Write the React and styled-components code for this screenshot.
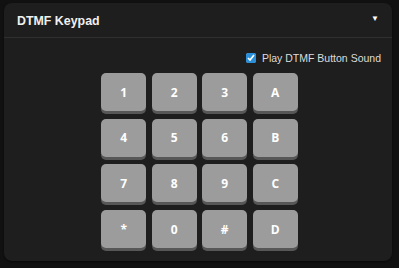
import React from "react";
import styled, { createGlobalStyle } from "styled-components";

const Global = createGlobalStyle`
  html, body { margin: 0; padding: 0; background: #111111; }
  body { font-family: "Liberation Sans", Arial, sans-serif; }
  * { box-sizing: border-box; }
`;

const Page = styled.div`
  padding: 3px 7px 7px 4px;
  width: 399px;
  height: 268px;
`;

const Card = styled.section`
  background: #1e1e1e;
  border-radius: 8px;
  height: 258px;
  display: flex;
  flex-direction: column;
  box-shadow: 0 1px 2px rgba(0,0,0,0.5);
`;

const Header = styled.header`
  display: flex;
  align-items: center;
  justify-content: space-between;
  height: 35px;
  padding: 0 13px 0 13px;
  border-bottom: 1px solid #2f2f2f;
`;

const Title = styled.h2`
  margin: 0;
  font-size: 12.4px;
  font-weight: 700;
  color: #f0f0f0;
  padding-top: 1px;
`;

const Caret = styled.span`
  font-size: 8px;
  color: #ffffff;
  margin-top: -3px;
`;

const Body = styled.div`
  display: flex;
  flex-direction: column;
  align-items: center;
  padding: 13px 11px 0 11px;
`;

const SoundRow = styled.label`
  align-self: flex-end;
  display: flex;
  align-items: center;
  gap: 6px;
  font-size: 10.5px;
  color: #dcdcdc;
  height: 14px;
`;

const Check = styled.input`
  margin: 0;
  width: 10px;
  height: 10px;
  accent-color: #2a8fd8;
`;

const Grid = styled.div`
  display: grid;
  grid-template-columns: repeat(4, 45px);
  grid-auto-rows: 40px;
  column-gap: 5.5px;
  row-gap: 5.7px;
  margin-top: 8px;
  margin-left: 3px;
`;

const Key = styled.button`
  border: none;
  border-radius: 5px;
  background: #9c9c9c;
  color: #ffffff;
  font-family: "Open Sans", "Liberation Sans", sans-serif;
  font-weight: 700;
  font-size: 12px;
  height: 38px;
  padding: 0;
  box-shadow: 0 3px 0 #575757;
  cursor: pointer;
`;

const keys = ["1", "2", "3", "A", "4", "5", "6", "B", "7", "8", "9", "C", "*", "0", "#", "D"];

export default function App() {
  return (
    <>
      <Global />
      <Page>
        <Card>
          <Header>
            <Title>DTMF Keypad</Title>
            <Caret>▼</Caret>
          </Header>
          <Body>
            <SoundRow>
              <Check type="checkbox" defaultChecked />
              Play DTMF Button Sound
            </SoundRow>
            <Grid>
              {keys.map((k) => (
                <Key key={k}>{k}</Key>
              ))}
            </Grid>
          </Body>
        </Card>
      </Page>
    </>
  );
}
